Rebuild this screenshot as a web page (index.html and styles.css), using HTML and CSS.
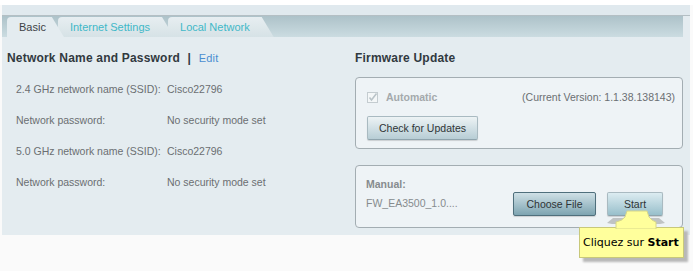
FILE: index.html
```html
<!DOCTYPE html>
<html lang="en">
<head>
    <meta charset="UTF-8">
    <title>Connectivity</title>
    <link rel="stylesheet" href="styles.css">
</head>
<body>
<div class="page">
    <div class="topstrip"></div>

    <div class="panel">
        <div class="tabbar">
            <div class="tab active">Basic</div>
            <div class="tab">Internet Settings</div>
            <div class="tab">Local Network</div>
        </div>

        <div class="columns">
            <!-- left: wireless names -->
            <div class="col-left">
                <h2>Network Name and Password <span class="sep">|</span> <a class="edit">Edit</a></h2>
                <div class="row"><span class="label">2.4 GHz network name (SSID):</span><span>Cisco22796</span></div>
                <div class="row"><span class="label">Network password:</span><span>No security mode set</span></div>
                <div class="row"><span class="label">5.0 GHz network name (SSID):</span><span>Cisco22796</span></div>
                <div class="row"><span class="label">Network password:</span><span>No security mode set</span></div>
            </div>

            <!-- right: firmware -->
            <div class="col-right">
                <h2>Firmware Update</h2>
                <div class="box auto-box">
                    <div class="auto-line">
                        <label class="auto">
                            <span class="check">
                                <svg width="11" height="11" viewBox="0 0 11 11"><rect x="0.5" y="0.5" width="10" height="10" fill="#f4f7f8" stroke="#c4ccd0"/><path d="M2.5 5.5 L4.5 8 L9.5 1.5" fill="none" stroke="#b9c3c8" stroke-width="1.6"/></svg>
                            </span>
                            Automatic
                        </label>
                        <span class="version">(Current Version: 1.1.38.138143)</span>
                    </div>
                    <button class="btn">Check for Updates</button>
                </div>

                <div class="box manual-box">
                    <div class="manual-info">
                        <div class="manual-title">Manual:</div>
                        <div class="file-name">FW_EA3500_1.0....</div>
                    </div>
                    <button class="btn dark choose">Choose File</button>
                    <button class="btn start">Start</button>
                </div>
            </div>
        </div>
    </div>

    <div class="footer"></div>

    <!-- help balloon pointing at Start -->
    <div class="tooltip">
        <svg class="pointer" width="64" height="20" viewBox="0 0 64 20">
            <path d="M3 14 L9 9 L55 9 L61 14 L56 15 L8 15 Z" fill="#bfc3c4"/>
            <path d="M12 20 L12 13 Q18 12 21 8 L23 2 L43 2 L45 8 Q48 12 52 13 L52 20 Z" fill="#ffff9c" stroke="#d6d68a" stroke-width="1"/>
        </svg>
        Cliquez sur <b>Start</b>
    </div>
</div>
</body>
</html>
```

FILE: styles.css
```css
body {
    margin: 0;
    background-color: #fafafa;
    font-family: "Liberation Sans", Arial, sans-serif;
    font-size: 10.5px;
    color: #6b6f72;
}
.page {
    position: relative;
    height: 271px;
}
.topstrip {
    height: 5px;
    background-color: #ffffff;
}
.panel {
    margin-left: 2px;
    width: 688px;
    height: 220px;
    background-color: #e4ecf0;
    border-top: 10px solid #e0e9ee;
}
.panel::before {
    content: "";
    display: block;
    height: 1px;
    background-color: #b4bfc4;
}
.footer {
    height: 36px;
    background-color: #fafafa;
}
.tabbar {
    display: flex;
    width: 676px;
    height: 21px;
    padding-left: 5px;
    background: linear-gradient(#adc2c9, #cbdce1);
}
.tab {
    height: 20px;
    margin-top: 1px;
    margin-right: -6px;
    padding: 0 24px 0 12px;
    line-height: 21px;
    font-size: 11px;
    color: #3fb8c8;
    background: linear-gradient(#e7eef1, #d6e2e6);
    border-top-left-radius: 4px;
    clip-path: polygon(0 0, calc(100% - 12px) 0, 100% 100%, 0 100%);
}
.tab.active {
    position: relative;
    z-index: 1;
    padding-right: 18px;
    color: #3c4246;
    background: #e4ecf0;
}
.columns {
    display: flex;
    padding: 14px 0 0 5px;
}
.col-left {
    width: 348px;
}
.col-right {
    width: 328px;
}
h2 {
    margin: 0 0 12px;
    height: 14px;
    line-height: 14px;
    font-size: 12px;
    font-weight: bold;
    color: #31393f;
    letter-spacing: 0.2px;
}
.col-left h2 {
    margin-bottom: 17px;
}
.sep {
    margin: 0 4px;
    color: #31393f;
}
.edit {
    font-weight: normal;
    font-size: 11px;
    color: #4a8ed0;
}
.row {
    display: flex;
    height: 31px;
    padding-left: 9px;
    line-height: 14px;
    white-space: nowrap;
}
.row .label {
    flex-shrink: 0;
    width: 151px;
}
.box {
    border: 1px solid #a3adb2;
    border-radius: 4px;
    background-color: #eef3f6;
}
.auto-box {
    height: 70px;
    padding: 0 7px 0 11px;
}
.auto-line {
    display: flex;
    justify-content: space-between;
    align-items: center;
    height: 38px;
}
.auto {
    display: flex;
    align-items: center;
    color: #a4a9ac;
    font-weight: bold;
}
.check {
    display: flex;
    margin-right: 8px;
}
.version {
    color: #6b6f72;
}
.btn {
    font-family: "Liberation Sans", Arial, sans-serif;
    font-size: 10.5px;
    color: #2e3436;
    height: 24px;
    padding: 0;
    border: 1px solid #a9bac1;
    border-bottom-color: #8fa4ad;
    border-radius: 2px;
    background: linear-gradient(#edf3f5, #b7cdd5);
    box-shadow: 0 1px 1px rgba(0, 0, 0, 0.15);
}
.auto-box .btn {
    width: 111px;
}
.manual-box {
    display: flex;
    align-items: flex-start;
    height: 61px;
    margin-top: 16px;
    padding: 0 0 0 10px;
}
.manual-info {
    width: 147px;
    padding-top: 11px;
    line-height: 14px;
}
.manual-title {
    font-weight: bold;
    color: #868b8e;
    margin-bottom: 5px;
}
.file-name {
    color: #868b8e;
}
.btn.dark {
    border-color: #4f6f7c;
    background: linear-gradient(#cfe0e6, #7da4b1);
}
.choose {
    width: 83px;
    margin-top: 26px;
}
.start {
    width: 56px;
    margin: 26px 0 0 11px;
    background: linear-gradient(#dcecf1, #98bfcb);
}
.tooltip {
    position: absolute;
    left: 579px;
    top: 227px;
    width: 100px;
    height: 29px;
    padding-left: 3px;
    line-height: 29px;
    font-family: "DejaVu Sans", Verdana, sans-serif;
    font-size: 11px;
    color: #000000;
    white-space: nowrap;
    background-color: #ffff9c;
    border: 1px solid #c8c87a;
    box-shadow: 4px 4px 2px #b8b8b8;
}
.pointer {
    position: absolute;
    left: 24px;
    top: -19px;
}
```
